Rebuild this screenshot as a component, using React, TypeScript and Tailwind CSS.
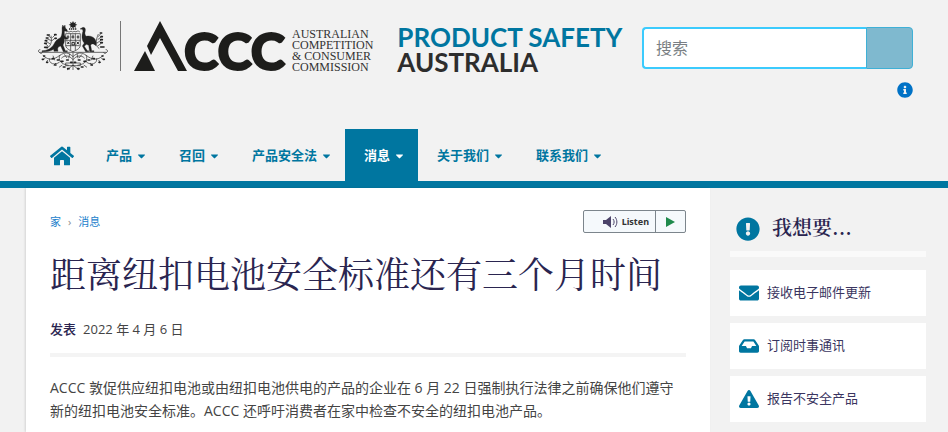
import type { ReactNode } from "react";
import {
  FaCaretDown,
  FaEnvelope,
  FaExclamationCircle,
  FaExclamationTriangle,
  FaHome,
  FaInbox,
  FaInfoCircle,
} from "react-icons/fa";

const navItems = [
  { id: "products", label: "产品" },
  { id: "recalls", label: "召回" },
  { id: "law", label: "产品安全法" },
  { id: "news", label: "消息", active: true },
  { id: "about", label: "关于我们" },
  { id: "contact", label: "联系我们" },
];

const actions: { id: string; label: string; icon: ReactNode }[] = [
  { id: "email", label: "接收电子邮件更新", icon: <FaEnvelope size={20} /> },
  { id: "newsletter", label: "订阅时事通讯", icon: <FaInbox size={20} /> },
  { id: "report", label: "报告不安全产品", icon: <FaExclamationTriangle size={20} /> },
];

function CoatOfArms() {
  return (
    <svg className="h-[50px] w-[70px] shrink-0" viewBox="0 0 210 150" fill="none" stroke="#222" strokeWidth="2" aria-hidden="true">
      {/* star and torse */}
      <path fill="#222" stroke="none" d="M105 0l3 6 6-3-2 6 6 2-6 3 2 6-6-2-3 5-3-5-6 2 2-6-6-3 6-2-2-6 6 3z" />
      <path d="M93 24h24" strokeWidth="4" strokeDasharray="4 2" />
      {/* shield */}
      <path d="M83 38h44v34c0 9-9 15-22 20-13-5-22-11-22-20z" />
      <path d="M83 58h44M98 38v50M112 38v50M83 74h42" />
      <path d="M90 43v10M86 48h8M105 41v12M100 48h9M120 43v10M116 48h8M88 62l6 7M94 62l-6 7M102 64h7v8h-7zM116 62l7 8M123 62l-7 8" strokeWidth="3" />
      <path d="M84 33c5-5 8 3 12-1s7 3 10 0 7 3 11-1 7 3 9 1" />
      {/* kangaroo */}
      <path
        fill="#222"
        stroke="#222"
        strokeWidth="1"
        d="M72 21l2-9 4 5 3-5 1 9c4 3 6 7 6 9l-9 1c0 7 0 12 3 17l8 4-2 3-9-2c1 8-1 14-4 19l7 17h6v3H76l-8-17c-6 1-9 5-9 9l1 7H48l-1-6c-10 6-21 9-35 7v-3c18 0 29-8 36-20 4-9 10-14 18-18 6-5 7-18 6-30z"
      />
      {/* emu */}
      <path
        fill="#222"
        stroke="#222"
        strokeWidth="1"
        d="M126 24l9-5c5 0 8 3 7 10-2 7-2 12 3 17 9-3 22 1 27 10 3 6 3 12 1 18-4-5-8-6-12-5l-3 4 3 16h7v3h-13l-3-19-7-3-6 6 9 13h4v3h-9l-10-17 6-9c-8-8-9-21-4-36l-2-5z"
      />
      {/* scroll base */}
      <path d="M4 94h202M4 94c-5-2-3-9 3-8M206 94c5-2 3-9-3-8M4 94c4 5 8 4 9 0M206 94c-4 5-8 4-9 0" />
      {/* wattle branches beside the shield */}
      <path d="M26 83c12-8 17-20 13-39M32 77l-10-9M37 69l-13-8M41 59l-15-6M39 51l-10-9M42 59l10-8M43 50l8-8M184 83c-12-8-12-22-3-44M179 75l12-9M177 66l13-9M179 56l12-9M181 47l8-10M176 67l-9-9" />
      <path d="M20 67h5M22 59h4M25 51h5M28 42h6M50 41h4M51 52h4M188 65h5M188 56h5M189 47h4M187 36h4M20 79h8M188 78h10" strokeWidth="5" strokeLinecap="round" />
      {/* lower foliage */}
      <path d="M14 103c19 17 33 13 50 1s27-10 41 3c14-13 25-15 41-3s32 16 50-1M34 112c-2 17 17 22 31 11M176 112c2 17-17 22-31 11M66 102c-7 14 2 28 26 31M144 102c7 14-2 28-26 31M105 95v52M70 112c10-11 24-9 35 4 11-13 25-15 35-4M83 126h44v8H83zM105 132l-18 15M105 132l18 15" />
      <path d="M22 112l-8 4M29 117l-4 8M45 104l5 14M54 126l-7 7M79 100l8 11M95 98l-3 14M117 98l3 14M132 100l-9 11M165 104l-6 14M156 126l8 7M182 117l5 8M190 112l8 4M73 132l-10 7M137 132l10 7" />
      <path d="M17 105h3M13 115h3M26 124h3M43 113h4M50 132h4M58 117h5M69 121h6M76 138h5M89 143h4M98 124h4M109 124h4M119 143h4M130 138h5M138 121h6M150 117h5M159 132h4M165 113h4M183 124h3M196 115h3M192 105h3M86 117h5M121 117h5" strokeWidth="5" strokeLinecap="round" />
    </svg>
  );
}

function AcccLogo() {
  return (
    <svg className="h-[64px] w-[156px] shrink-0 overflow-visible" viewBox="0 0 156 64" fill="#1d1d1b" role="img" aria-label="ACCC">
      <path d="M0 50l11-20 10 20zM26 0l27 50h-9L26 17 17 34l-4-9z" />
      <text x="50" y="49" fontFamily="Lato, sans-serif" fontSize="52" fontWeight="900" stroke="#1d1d1b" strokeWidth="2">
        CCC
      </text>
    </svg>
  );
}

function SiteHeader() {
  return (
    <header>
      <div className="flex h-[129px] items-start justify-between pt-[21px] pr-[35px] pl-[38px]">
        <a href="#home" className="flex items-start">
          <CoatOfArms />
          <span className="ml-3 h-[50px] w-px bg-[#777]" />
          <span className="ml-[13px]">
            <AcccLogo />
          </span>
          <span className="ml-[2px] pt-2 font-['Liberation_Serif',serif] text-[12px] leading-[11px] whitespace-nowrap text-[#333]">
            AUSTRALIAN
            <br />
            COMPETITION
            <br />
            &amp; CONSUMER
            <br />
            COMMISSION
          </span>
          <span className="ml-6 pt-1 font-[Lato,sans-serif] text-[26px] leading-[25px] font-bold whitespace-nowrap">
            <span className="block text-[#0076a0]">PRODUCT SAFETY</span>
            <span className="block text-[#2d2d2d]">AUSTRALIA</span>
          </span>
        </a>

        <div className="flex flex-col items-end gap-[13px] pt-[6px]">
          <form className="flex h-[42px] w-[271px]" role="search">
            <input
              type="search"
              aria-label="搜索"
              placeholder="搜索"
              className="min-w-0 flex-1 rounded-l border-2 border-r-0 border-[#3ccbfd] bg-white px-3 text-[16px] text-[#333] outline-none placeholder:text-[#7a7f84]"
            />
            <button type="button" aria-label="提交搜索" className="w-[47px] rounded-r border border-[#3fb0d6] bg-[#7fb9cf]" />
          </form>
          <button type="button" aria-label="搜索帮助" className="text-[#0072c6]">
            <FaInfoCircle size={16} />
          </button>
        </div>
      </div>

      <nav className="flex h-[59px] items-stretch border-b-[7px] border-[#0076a0] pl-[50px] text-[13px] font-bold text-[#0076a0]">
        <a href="#home" aria-label="家" className="flex w-[37px] items-center pt-[2px]">
          <FaHome size={24} />
        </a>
        {navItems.map((item) => (
          <a
            key={item.id}
            href={`#${item.id}`}
            className={`flex items-center gap-1 pt-[2px] pr-[13px] pl-[19px] whitespace-nowrap ${item.active ? "bg-[#0076a0] text-white" : ""}`}
          >
            {item.label}
            <FaCaretDown className="h-3 w-[11px]" />
          </a>
        ))}
      </nav>
    </header>
  );
}

function ListenButton() {
  return (
    <div className="flex h-[23px] w-[103px] rounded-[2px] border border-[#7c858c] bg-[#f5f9fc]">
      <button type="button" className="flex flex-1 items-center justify-end gap-1 pr-[6px] font-['Noto_Sans',sans-serif] text-[9px] font-bold text-[#333]">
        <svg className="h-3 w-[15px]" viewBox="0 0 15 12" fill="none" aria-hidden="true">
          <path d="M0 4h3l5-4v12L3 8H0z" fill="#4b4369" />
          <path d="M10 3c1.500 2 1.500 4 0 6M12 1c2.500 3 2.500 7 0 10" stroke="#4b4369" />
        </svg>
        Listen
      </button>
      <button type="button" aria-label="播放" className="flex w-[30px] items-center justify-center border-l border-[#7c858c]">
        <svg className="h-[10px] w-[9px]" viewBox="0 0 9 10" aria-hidden="true">
          <path d="M0 0l9 5-9 5z" fill="#1f8a4c" />
        </svg>
      </button>
    </div>
  );
}

function Article() {
  return (
    <main className="bg-white px-6 pt-[22px] shadow-[-1px_0_2px_rgba(0,0,0,0.12)]">
      <div className="flex items-center justify-between">
        <nav className="flex gap-[7px] text-[11px] leading-4 text-[#1b7fcc]">
          <a href="#home">家</a>
          <span className="text-[#888]">›</span>
          <a href="#news">消息</a>
        </nav>
        <ListenButton />
      </div>
      <h1 className="mt-[15px] font-['Noto_Serif_CJK_SC','Noto_Sans_CJK_SC',serif] text-[36px] leading-[50px] font-normal text-[#2a2550]">
        距离纽扣电池安全标准还有三个月时间
      </h1>
      <p className="mt-[21px] text-[13px] leading-5 text-[#444]">
        <span className="mr-[7px] font-medium text-[#2a2550]">发表</span>
        <time dateTime="2022-04-06">2022 年 4 月 6 日</time>
      </p>
      <hr className="mt-[14px] border-t-4 border-[#f4f4f4]" />
      <p className="mt-[19px] text-[14px] leading-[23px] text-[#444]">
        ACCC 敦促供应纽扣电池或由纽扣电池供电的产品的企业在 6 月 22 日强制执行法律之前确保他们遵守新的纽扣电池安全标准。ACCC 还呼吁消费者在家中检查不安全的纽扣电池产品。
      </p>
    </main>
  );
}

function Sidebar() {
  return (
    <aside>
      <h2 className="flex items-center gap-3 border-b-[6px] border-[#fafafa] pt-[27px] pb-2 pl-[6px] font-['Noto_Serif_CJK_SC','Noto_Sans_CJK_SC',serif] text-[20px] leading-7 font-semibold text-[#2a2550]">
        <FaExclamationCircle size={24} className="text-[#0076a0]" />
        <span className="pb-1 leading-6">我想要...</span>
      </h2>
      <ul className="mt-[13px] flex flex-col gap-[7px]">
        {actions.map((action) => (
          <li key={action.id}>
            <a href={`#${action.id}`} className="flex h-[46px] items-center gap-2 bg-white pl-[9px] text-[13px] text-[#3a3560]">
              <span className="text-[#0076a0]">{action.icon}</span>
              {action.label}
            </a>
          </li>
        ))}
      </ul>
    </aside>
  );
}

export default function App() {
  return (
    <div lang="zh-CN" className="min-h-screen bg-[#f2f2f2] font-['Open_Sans','Noto_Sans_CJK_SC',sans-serif]">
      <SiteHeader />
      <div className="grid min-h-[244px] grid-cols-[minmax(0,1fr)_196px] gap-5 pr-[22px] pl-[26px]">
        <Article />
        <Sidebar />
      </div>
    </div>
  );
}
